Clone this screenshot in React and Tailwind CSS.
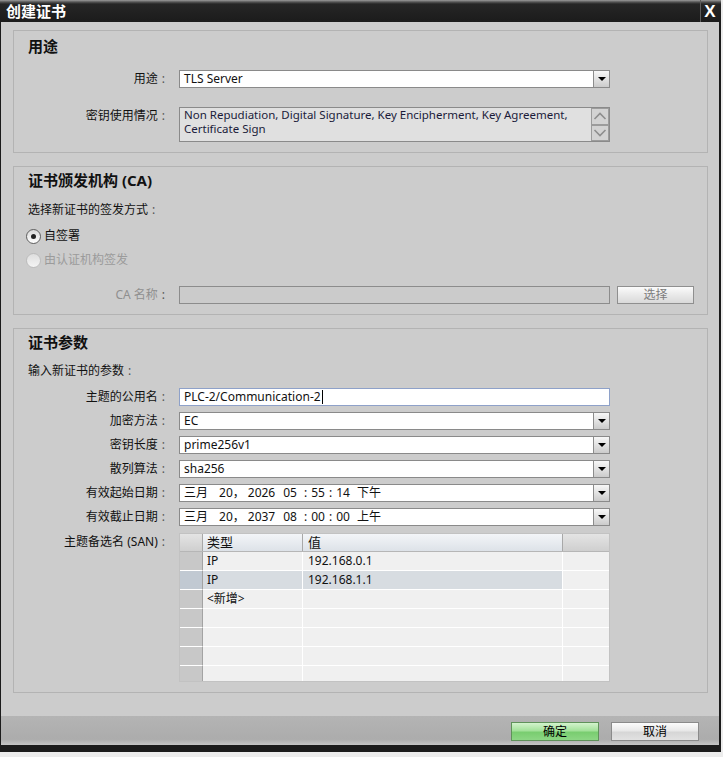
import React from "react";

function Label({ children, className = "" }) {
  return (
    <div className={`w-[151px] shrink-0 text-right text-[12px] leading-[16px] ${className}`}>
      {children}
      <span className="ml-[4px] text-[#555]">:</span>
    </div>
  );
}

function DropBtn() {
  return (
    <div className="w-[16px] shrink-0 flex items-center justify-center border-l border-[#8c8c8c] bg-[linear-gradient(#f7f7f7,#e2e2e2_50%,#cbcbcb)]">
      <div className="w-0 h-0 border-x-[4px] border-t-[4px] border-x-transparent border-t-black" />
    </div>
  );
}

function Combo({ children }) {
  return (
    <div className="ml-[14px] w-[431px] h-[18px] flex border border-[#8a8a8a] bg-white">
      <div className="flex-1 pl-[4px] text-[12px] leading-[16px] text-[#111] whitespace-nowrap overflow-hidden">{children}</div>
      <DropBtn />
    </div>
  );
}

function Row({ label, children, className = "" }) {
  return (
    <div className={`flex items-center h-[18px] ${className}`}>
      <Label>{label}</Label>
      {children}
    </div>
  );
}

function DateText({ y, h, m, s, ap }) {
  return (
    <div className="flex items-center h-[16px] text-[12px]">
      <span>三月</span>
      <span className="ml-[11px]">20</span>
      <span>，</span>
      <span className="ml-[3px]">{y}</span>
      <span className="ml-[8px]">{h}</span>
      <span className="ml-[7px]">:</span>
      <span className="ml-[4px]">{m}</span>
      <span className="ml-[4px]">:</span>
      <span className="ml-[4px]">{s}</span>
      <span className="ml-[7px]">{ap}</span>
    </div>
  );
}

function Chevron({ up }) {
  return (
    <svg width="14" height="8" viewBox="0 0 14 8">
      <polyline
        points={up ? "1.5,7 7,1.5 12.5,7" : "1.5,1 7,6.5 12.5,1"}
        fill="none"
        stroke="#8e8e8e"
        strokeWidth="1.6"
      />
    </svg>
  );
}

function Radio({ checked, disabled }) {
  return (
    <div
      className={`w-[15px] h-[15px] rounded-full border flex items-center justify-center ${
        disabled
          ? "border-[#bcbcbc] bg-[linear-gradient(#dedede,#f4f4f4)]"
          : "border-[#5e5e5e] bg-[linear-gradient(#d9d9d9,#ffffff)]"
      }`}
    >
      {checked && <div className="w-[5px] h-[5px] rounded-full bg-[#222]" />}
    </div>
  );
}

function TableRow({ a, b, selected, last }) {
  return (
    <div className={`flex ${last ? "h-[16px]" : "h-[19px]"}`}>
      <div className={`w-[23px] border-r border-r-[#a3a3a3] border-b border-b-white ${selected ? "bg-[#c1c9d2]" : "bg-[#c8c8c8]"}`} />
      <div className={`w-[100px] border-r border-b border-white pl-[4px] text-[12px] leading-[18px] ${selected ? "bg-[#d7dce1]" : ""}`}>{a}</div>
      <div className={`w-[260px] border-r border-b border-white pl-[5px] text-[12px] leading-[18px] ${selected ? "bg-[#d7dce1]" : ""}`}>{b}</div>
      <div className="flex-1 border-b border-white" />
    </div>
  );
}

export default function App() {
  return (
    <div className="w-[723px] h-[757px] bg-[#ececec] overflow-hidden font-['Noto_Sans','Noto_Sans_CJK_SC',sans-serif] text-[#111]">
      <div className="w-[721px] h-[752px] flex flex-col">
        {/* title bar */}
        <div className="h-[22px] flex items-center bg-[linear-gradient(to_bottom,#9c9c9c_0px,#555_2px,#262626_4px,#1b1b1b_100%)] pr-[2px]">
          <div className="flex-1 pl-[6px] text-white font-bold text-[15px] leading-[22px] font-['Noto_Sans_CJK_SC',sans-serif]">创建证书</div>
          <div className="w-[19px] h-full border-l border-[#5c5c5c] flex items-center justify-center text-white font-bold text-[17px] leading-none font-['Liberation_Sans',sans-serif]">X</div>
        </div>

        {/* body */}
        <div className="h-[694px] bg-[#cccccc] border-l border-r-2 border-[#1b1b1b] pt-[8px] pl-[12px] pr-[11px]">
          {/* section 1 */}
          <div className="border border-[#b3b3b3] pt-[5px] pb-[10px]">
            <div className="pl-[14px] text-[15px] font-bold leading-[20px]">用途</div>
            <Row label="用途" className="mt-[14px]">
              <Combo>TLS Server</Combo>
            </Row>
            <div className="flex items-start mt-[19px]">
              <Label className="mt-[1px]">密钥使用情况</Label>
              <div className="ml-[14px] w-[431px] h-[35px] flex border border-[#8a8a8a] bg-[#e0e0e0]">
                <div className="flex-1 pl-[4px] text-[11.5px] leading-[14px] text-[#1b1b3a] whitespace-nowrap">
                  <div>Non Repudiation, Digital Signature, Key Encipherment, Key Agreement,</div>
                  <div>Certificate Sign</div>
                </div>
                <div className="w-[18px] flex flex-col">
                  <div className="flex-1 border border-[#9c9c9c] bg-[#d3d3d3] flex items-center justify-center">
                    <Chevron up />
                  </div>
                  <div className="flex-1 border border-[#9c9c9c] bg-[#d3d3d3] flex items-center justify-center">
                    <Chevron />
                  </div>
                </div>
              </div>
            </div>
          </div>

          {/* section 2 */}
          <div className="mt-[13px] border border-[#b3b3b3] pt-[3px] pb-[10px]">
            <div className="pl-[14px] text-[15px] font-bold leading-[20px]">证书颁发机构 (CA)</div>
            <div className="pl-[14px] mt-[12px] text-[12px] leading-[16px]">
              选择新证书的签发方式<span className="ml-[4px] text-[#555]">:</span>
            </div>
            <div className="pl-[12px] mt-[10px] h-[16px] flex items-center gap-[3px]">
              <Radio checked />
              <span className="text-[12px] leading-[16px]">自签署</span>
            </div>
            <div className="pl-[12px] mt-[8px] h-[16px] flex items-center gap-[3px]">
              <Radio disabled />
              <span className="text-[12px] leading-[16px] text-[#9b9b9b]">由认证机构签发</span>
            </div>
            <div className="flex items-center h-[18px] mt-[18px]">
              <Label className="text-[#8f8f8f]">CA 名称</Label>
              <div className="ml-[14px] w-[431px] h-[18px] border border-[#8c8c8c] bg-[#cbcbcb]" />
              <div className="ml-[7px] w-[77px] h-[18px] border border-[#8f8f8f] bg-[linear-gradient(#fbfbfb,#e9e9e9_50%,#d9d9d9)] flex items-center justify-center text-[12px] leading-none text-[#7d7d7d]">
                选择
              </div>
            </div>
          </div>

          {/* section 3 */}
          <div className="mt-[13px] border border-[#b3b3b3] pt-[3px] pb-[10px]">
            <div className="pl-[14px] text-[15px] font-bold leading-[20px]">证书参数</div>
            <div className="pl-[14px] mt-[11px] text-[12px] leading-[16px]">
              输入新证书的参数<span className="ml-[4px] text-[#555]">:</span>
            </div>
            <div className="mt-[9px] flex flex-col gap-[6px]">
              <Row label="主题的公用名">
                <div className="ml-[14px] w-[431px] h-[18px] flex items-center border border-[#8ea1c9] bg-white pl-[4px] text-[12px] leading-[16px]">
                  PLC-2/Communication-2
                  <span className="inline-block w-px h-[14px] bg-black ml-[1px]" />
                </div>
              </Row>
              <Row label="加密方法">
                <Combo>EC</Combo>
              </Row>
              <Row label="密钥长度">
                <Combo>prime256v1</Combo>
              </Row>
              <Row label="散列算法">
                <Combo>sha256</Combo>
              </Row>
              <Row label="有效起始日期">
                <Combo>
                  <DateText y="2026" h="05" m="55" s="14" ap="下午" />
                </Combo>
              </Row>
              <Row label="有效截止日期">
                <Combo>
                  <DateText y="2037" h="08" m="00" s="00" ap="上午" />
                </Combo>
              </Row>
            </div>
            <div className="flex items-start mt-[7px]">
              <Label className="mt-[1px]">主题备选名 (SAN)</Label>
              <div className="ml-[14px] w-[431px] h-[149px] border border-[#c2c2c2] bg-[#f0f0f0] overflow-hidden">
                <div className="flex h-[18px] border-b border-[#b6b6b6]">
                  <div className="w-[23px] border-r border-[#a8a8a8] bg-[linear-gradient(#e4e4e4,#cfcfcf)]" />
                  <div className="w-[100px] border-r border-[#a8a8a8] bg-[linear-gradient(#f3f5f8,#dde2e8)] pl-[4px] text-[13px] leading-[17px]">类型</div>
                  <div className="w-[260px] border-r border-[#a8a8a8] bg-[linear-gradient(#f3f5f8,#dde2e8)] pl-[5px] text-[13px] leading-[17px]">值</div>
                  <div className="flex-1 bg-[linear-gradient(#e4e4e4,#cfcfcf)]" />
                </div>
                <TableRow a="IP" b="192.168.0.1" />
                <TableRow a="IP" b="192.168.1.1" selected />
                <TableRow a="<新增>" b="" />
                <TableRow a="" b="" />
                <TableRow a="" b="" />
                <TableRow a="" b="" />
                <TableRow a="" b="" last />
              </div>
            </div>
          </div>
        </div>

        {/* footer */}
        <div className="h-[29px] bg-[linear-gradient(#b4b4b4,#acacac_80%,#c6c6c6)] border-l border-r-2 border-[#1b1b1b] flex justify-end items-start pt-[6px] pr-[20px] gap-[12px]">
          <div className="w-[88px] h-[19px] border border-[#5f925a] bg-[linear-gradient(#d3f3cd,#a3e19a_45%,#79cd70_55%,#8cd684)] flex items-center justify-center text-[12px] leading-none text-black">
            确定
          </div>
          <div className="w-[88px] h-[19px] border border-[#8a8a8a] bg-[linear-gradient(#fbfbfb,#e8e8e8_45%,#d6d6d6_55%,#e2e2e2)] flex items-center justify-center text-[12px] leading-none text-black">
            取消
          </div>
        </div>
        <div className="h-[7px] bg-[#1c1c1c]" />
      </div>
    </div>
  );
}
